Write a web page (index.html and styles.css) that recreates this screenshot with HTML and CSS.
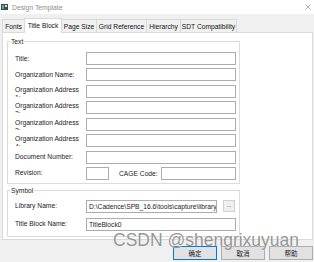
FILE: index.html
```html
<!DOCTYPE html>
<html>
<head>
<meta charset="utf-8">
<link rel="stylesheet" href="styles.css">
</head>
<body>
<div class="window">
  <div class="titlebar">
    <svg class="app-icon" width="7" height="6" viewBox="0 0 7 6"><rect x="0" y="0" width="7" height="6" fill="#3d4a55"/><rect x="1" y="1" width="2" height="4" fill="#4fb39a"/><rect x="4" y="1" width="2" height="2" fill="#d8e3ea"/></svg>
    <span class="title">Design Template</span>
    <svg class="close" width="6" height="6" viewBox="0 0 6 6"><path d="M0.5 0.5 L5.5 5.5 M5.5 0.5 L0.5 5.5" stroke="#9a9a9a" stroke-width="0.8" fill="none"/></svg>
  </div>
  <div class="tabs">
    <div class="tab">Fonts</div>
    <div class="tab active">Title Block</div>
    <div class="tab">Page Size</div>
    <div class="tab">Grid Reference</div>
    <div class="tab">Hierarchy</div>
    <div class="tab">SDT Compatibility</div>
  </div>
  <div class="panel">
    <fieldset class="group text-group">
      <legend>Text</legend>
      <div class="form">
        <label class="lbl">Title:</label><div class="field"></div>
        <label class="lbl">Organization Name:</label><div class="field"></div>
        <label class="lbl wrap">Organization Address 1:</label><div class="field"></div>
        <label class="lbl wrap">Organization Address 2:</label><div class="field"></div>
        <label class="lbl wrap">Organization Address 3:</label><div class="field"></div>
        <label class="lbl wrap">Organization Address 4:</label><div class="field"></div>
        <label class="lbl">Document Number:</label><div class="field"></div>
        <label class="lbl">Revision:</label>
        <div class="split">
          <div class="field rev"></div>
          <span class="cage">CAGE Code:</span>
          <div class="field cage-field"></div>
        </div>
      </div>
    </fieldset>
    <fieldset class="group symbol-group">
      <legend>Symbol</legend>
      <div class="form sym">
        <label class="lbl">Library Name:</label>
        <div class="split">
          <div class="field lib">D:\Cadence\SPB_16.6\tools\capture\library\</div>
          <div class="browse">...</div>
        </div>
        <label class="lbl">Title Block Name:</label><div class="field">TitleBlock0</div>
      </div>
    </fieldset>
  </div>
  <div class="footer">
    <div class="btn primary">确定</div>
    <div class="btn">取消</div>
    <div class="btn">帮助</div>
  </div>
  <div class="watermark">CSDN @shengrixuyuan</div>
</div>
</body>
</html>
```
FILE: styles.css
```css
html, body {
  margin: 0;
  padding: 0;
}
body {
  width: 314px;
  height: 262px;
  overflow: hidden;
  background: #f0f0f0;
  font-family: "Liberation Sans", Arial, "Noto Sans CJK SC", sans-serif;
  font-size: 6.7px;
  color: #1a1a1a;
}
.window {
  position: relative;
  width: 314px;
  height: 262px;
}
.titlebar {
  height: 14px;
  background: #ffffff;
  display: flex;
  align-items: center;
  padding-left: 1px;
}
.app-icon {
  margin-top: 0;
}
.title {
  margin-left: 4px;
  color: #8e8e8e;
  font-size: 6.8px;
}
.close {
  margin-left: auto;
  margin-right: 3px;
  margin-top: -1px;
}
.tabs {
  height: 18px;
  display: grid;
  grid-template-columns: 22px 38px 34px 50px 34px 57px;
  align-items: end;
  padding-left: 2px;
}
.tab {
  height: 13px;
  box-sizing: border-box;
  border: 1px solid #d9d9d9;
  border-right: none;
  border-bottom: none;
  background: #f0f0f0;
  display: flex;
  align-items: center;
  justify-content: center;
  color: #111;
  white-space: nowrap;
}
.tab:last-child {
  border-right: 1px solid #d9d9d9;
}
.tab.active {
  height: 15px;
  margin-bottom: -1px;
  background: #ffffff;
  border-right: 1px solid #d9d9d9;
  padding-bottom: 1px;
  z-index: 1;
}
.tab.active + .tab {
  border-left: none;
}
.panel {
  margin-left: 2px;
  width: 311px;
  height: 208px;
  box-sizing: border-box;
  background: #ffffff;
  border: 1px solid #d9d9d9;
  padding: 4px 0 0 4px;
}
.group {
  margin: 0;
  width: 233px;
  box-sizing: border-box;
  border: 1px solid #dcdcdc;
  padding: 6px 3px 3px 7px;
  min-inline-size: 0;
}
.group legend {
  padding: 0 1px;
  margin-left: -5px;
  line-height: 9px;
  color: #1a1a1a;
}
.symbol-group {
  margin-top: 2px;
  padding-top: 5px;
  padding-bottom: 5px;
}
.form {
  display: grid;
  grid-template-columns: 71px 150px;
  grid-auto-rows: 13px;
  row-gap: 3.43px;
  align-items: center;
}
.form.sym {
  row-gap: 5px;
}
.lbl {
  white-space: nowrap;
  line-height: 8px;
}
.lbl.wrap {
  white-space: normal;
  width: 68px;
  height: 11px;
  overflow: hidden;
  align-self: start;
  margin-top: 1px;
}
.field {
  height: 13px;
  box-sizing: border-box;
  border: 1px solid #acacac;
  background: #fff;
  line-height: 11px;
  padding-left: 2px;
  white-space: nowrap;
  overflow: hidden;
  color: #1a1a1a;
}
.split {
  display: flex;
  align-items: center;
  height: 13px;
}
.field.rev {
  width: 23px;
}
.cage {
  margin-left: 10px;
}
.field.cage-field {
  margin-left: auto;
  width: 75px;
}
.field.lib {
  width: 131px;
}
.browse {
  margin-left: 6px;
  width: 12px;
  height: 12px;
  box-sizing: border-box;
  border: 1px solid #d0d0d0;
  background: #efefef;
  font-size: 6px;
  line-height: 8px;
  text-align: center;
  color: #333;
}
.footer {
  display: flex;
  justify-content: flex-end;
  gap: 4px;
  margin-top: 6px;
  padding-right: 1px;
}
.btn {
  width: 44px;
  height: 14px;
  box-sizing: border-box;
  border: 1px solid #adadad;
  background: #e1e1e1;
  font-family: "Noto Sans CJK SC", sans-serif;
  font-size: 6.5px;
  display: flex;
  align-items: center;
  justify-content: center;
  color: #1a1a1a;
}
.btn.primary {
  border-color: #0078d7;
}
.watermark {
  position: absolute;
  left: 113px;
  top: 230px;
  font-family: "Liberation Sans", Arial, sans-serif;
  font-size: 17.5px;
  color: rgba(130, 130, 130, 0.85);
  text-shadow: 0 0 1px #ffffff;
  white-space: nowrap;
  pointer-events: none;
}
```
